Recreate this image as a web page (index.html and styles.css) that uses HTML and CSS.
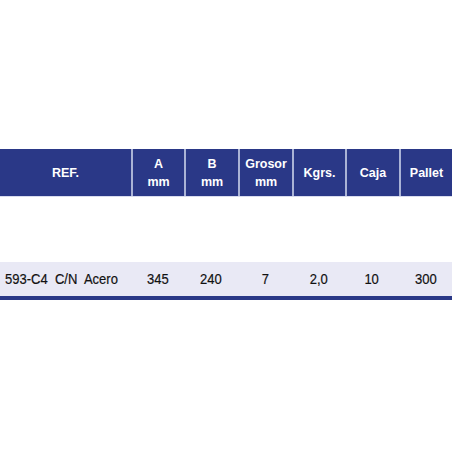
FILE: index.html
```html
<!DOCTYPE html>
<html>
<head>
<meta charset="utf-8">
<link rel="stylesheet" href="styles.css">
</head>
<body>
<div class="page">
  <div class="head">
    <div class="hc first">REF.</div>
    <div class="hc">A<br>mm</div>
    <div class="hc">B<br>mm</div>
    <div class="hc">Grosor<br>mm</div>
    <div class="hc">Kgrs.</div>
    <div class="hc">Caja</div>
    <div class="hc">Pallet</div>
  </div>
  <div class="row">
    <div class="dc ref"><span class="nar">593-C4&nbsp; C/N&nbsp; Acero</span></div>
    <div class="dc"><span class="nar">345</span></div>
    <div class="dc"><span class="nar">240</span></div>
    <div class="dc"><span class="nar">7</span></div>
    <div class="dc"><span class="nar">2,0</span></div>
    <div class="dc"><span class="nar">10</span></div>
    <div class="dc"><span class="nar">300</span></div>
  </div>
</div>
</body>
</html>
```
FILE: styles.css
```css
html, body { margin: 0; padding: 0; background: #fff; }
.page { width: 452px; height: 452px; padding-top: 149px; box-sizing: border-box; }
.head {
  display: grid;
  grid-template-columns: 131px 53px 54px 54px 53px 54px 53px;
  height: 47px;
  background: #2a3887;
  border-bottom: 1px solid #d8dcee;
}
.hc {
  display: flex; align-items: center; justify-content: center; text-align: center;
  color: #fff; font-family: "Liberation Sans", Arial, sans-serif; font-weight: bold;
  font-size: 12.5px; line-height: 18px;
  border-left: 2px solid #aab3d6;
}
.hc.first { border-left: none; }
.row {
  margin-top: 65px;
  display: grid;
  grid-template-columns: 131px 53px 54px 54px 53px 54px 53px;
  height: 34px;
  background: #e9e9f5;
  border-bottom: 4px solid #2a3887;
}
.dc {
  display: flex; align-items: center; justify-content: center;
  font-family: "Liberation Sans", Arial, sans-serif;
  font-size: 15.5px; color: #111; white-space: nowrap;
  -webkit-text-stroke: 0.2px #111;
}
.nar { display: inline-block; transform: scaleX(0.84); }
.dc.ref { justify-content: flex-start; padding-left: 5px; }
.dc.ref .nar { transform-origin: left center; }
```
